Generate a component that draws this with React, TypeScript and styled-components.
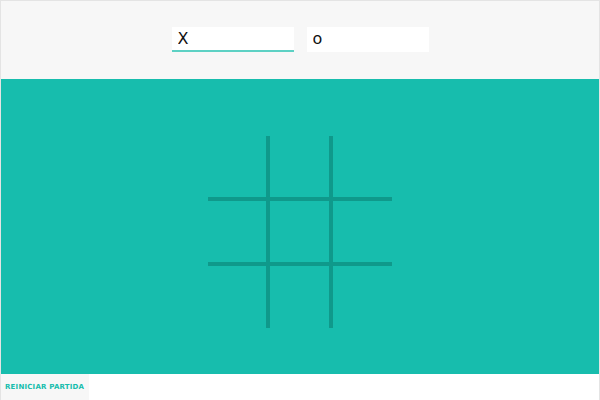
import React, { useState } from "react";
import styled, { createGlobalStyle } from "styled-components";

const GlobalStyle = createGlobalStyle`
    html, body {
        margin: 0;
        padding: 0;
        background: #fff;
        font-family: "DejaVu Sans", "Liberation Sans", sans-serif;
    }
`

const Page = styled.div`
    display: flex;
    flex-direction: column;
    border: 1px solid #e4e4e4;
    border-bottom: none;
    height: 399px;
`

const Players = styled.header`
    display: flex;
    justify-content: center;
    gap: 13px;
    height: 78px;
    padding-top: 26px;
    box-sizing: border-box;
    background: #f7f7f7;
`

const PlayerInput = styled.input<{ $active?: boolean }>`
    width: 122px;
    height: 25px;
    box-sizing: border-box;
    padding: 0 6px;
    border: none;
    border-bottom: 2px solid ${p => p.$active ? "#5dd1c4" : "#fff"};
    background: #fff;
    font-family: inherit;
    font-size: 16px;
    color: #111;
    outline: none;
`

const Board = styled.main`
    display: flex;
    justify-content: center;
    align-items: flex-start;
    height: 295px;
    padding-top: 57px;
    box-sizing: border-box;
    background: #17bdad;
`

const Grid = styled.div`
    display: grid;
    grid-template-columns: 58px 59px 59px;
    grid-template-rows: 61px 61px 62px;
    gap: 4px;
    background: #0f998b;
`

const Cell = styled.div`
    background: #17bdad;
    cursor: pointer;
`

const Footer = styled.footer`
    display: flex;
    flex: 1;
`

const ResetButton = styled.button`
    width: 88px;
    border: none;
    background: #f7f7f7;
    color: #17bdad;
    font-family: inherit;
    font-size: 7px;
    font-weight: 700;
    letter-spacing: 0.2px;
    text-transform: uppercase;
    padding: 0 0 0 4px;
    text-align: left;
    white-space: nowrap;
    cursor: pointer;
`

function App() {
    const [playerX, setPlayerX] = useState("X");
    const [playerO, setPlayerO] = useState("o");
    const [cells, setCells] = useState<string[]>(Array(9).fill(""));

    return (
        <>
            <GlobalStyle />
            <Page>
                <Players>
                    <PlayerInput $active value={playerX} onChange={e => setPlayerX(e.currentTarget.value)} />
                    <PlayerInput value={playerO} onChange={e => setPlayerO(e.currentTarget.value)} />
                </Players>
                <Board>
                    <Grid>
                        {cells.map((c, i) => <Cell key={i}>{c}</Cell>)}
                    </Grid>
                </Board>
                <Footer>
                    <ResetButton onClick={() => setCells(Array(9).fill(""))}>Reiniciar partida</ResetButton>
                </Footer>
            </Page>
        </>
    )
}

export default App;
